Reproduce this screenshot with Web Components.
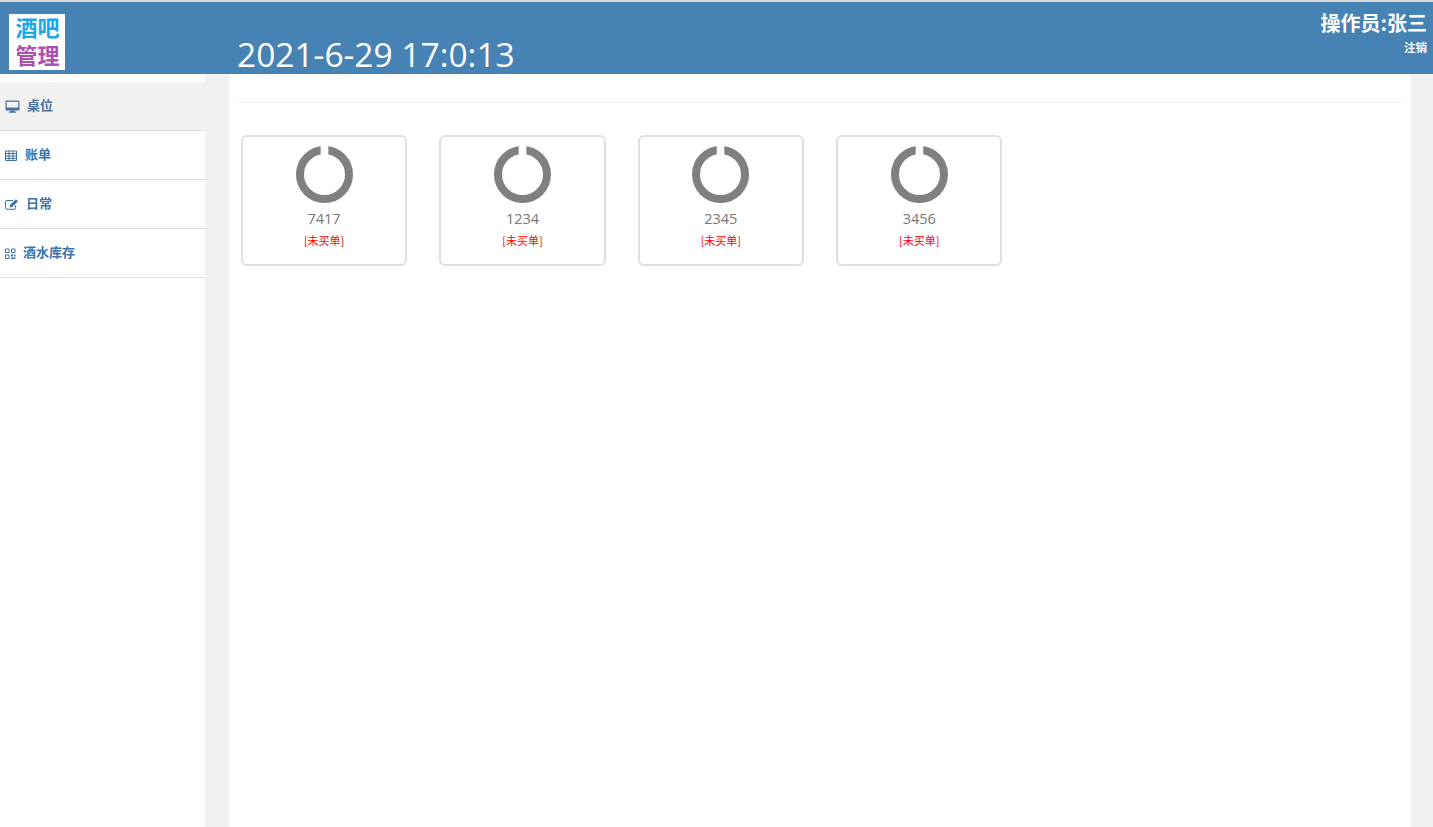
<!DOCTYPE html>
<html lang="zh">
<head>
<meta charset="utf-8">
<title>酒吧管理</title>
<style>
  html, body { margin: 0; height: 100%; background: #f1f1f1; overflow: hidden; }
  body { font-family: "Open Sans", "Noto Sans CJK SC", sans-serif; }
</style>
</head>
<body>
<bar-app>
  <bar-header slot="header" time="2021-6-29 17:0:13" operator="操作员:张三"></bar-header>
  <bar-sidebar slot="sidebar">
    <nav-item icon="desktop" label="桌位" gap="7" active></nav-item>
    <nav-item icon="table" label="账单" gap="5"></nav-item>
    <nav-item icon="edit" label="日常" gap="6"></nav-item>
    <nav-item icon="qrcode" label="酒水库存" gap="3"></nav-item>
  </bar-sidebar>
  <table-card name="7417"></table-card>
  <table-card name="1234"></table-card>
  <table-card name="2345"></table-card>
  <table-card name="3456"></table-card>
</bar-app>

<script>
class BarApp extends HTMLElement {
  constructor () {
    super()
    this.attachShadow({ mode: 'open' }).innerHTML = /*html*/`
    <style>
      :host { display: block; height: 827px; padding-top: 2px; box-sizing: border-box; background: #d8d8d8; }
      .body { display: grid; grid-template-columns: 205px 1fr; height: 753px; background: #f1f1f1; }
      main { background: #fff; margin: 0 22px 0 24px; padding: 0 8px; min-width: 0; }
      .rule { height: 28px; border-bottom: 1px solid #eee; }
      .cards { display: flex; gap: 32.2px; padding: 32px 0 0 4px; }
    </style>
    <slot name="header"></slot>
    <div class="body">
      <slot name="sidebar"></slot>
      <main>
        <div class="rule"></div>
        <div class="cards"><slot></slot></div>
      </main>
    </div>`
  }
}

class BarHeader extends HTMLElement {
  constructor () {
    super()
    this.attachShadow({ mode: 'open' }).innerHTML = /*html*/`
    <style>
      :host { display: flex; height: 72px; background: #4682b4; color: #fff; }
      .logo { width: 56px; height: 56px; box-sizing: border-box; padding: 1px 0 0 1px; margin: 12px 0 0 9px; background: #fff; font: 700 22px/28px "Liberation Sans", "Noto Sans CJK SC", sans-serif; text-align: center; flex: none; }
      .logo div:first-child { color: #1ea6ea; }
      .logo div:last-child { color: #ad4fb2; }
      .time { margin: 31px 0 0 172px; font-size: 33.5px; line-height: 42px; white-space: nowrap; }
      .user { margin-left: auto; padding: 8px 6px 0 0; text-align: right; font-weight: 700; font-family: "Noto Sans CJK SC", sans-serif; }
      .name { font-size: 20px; line-height: 26px; }
      .out { font-size: 11.5px; line-height: 14px; margin-top: 4px; }
    </style>
    <div class="logo"><div>酒吧</div><div>管理</div></div>
    <div class="time"></div>
    <div class="user"><div class="name"></div><div class="out">注销</div></div>`
  }

  connectedCallback () {
    this.shadowRoot.querySelector('.time').textContent = this.getAttribute('time')
    this.shadowRoot.querySelector('.name').textContent = this.getAttribute('operator')
  }
}

class BarSidebar extends HTMLElement {
  constructor () {
    super()
    this.attachShadow({ mode: 'open' }).innerHTML = /*html*/`
    <style>
      :host { display: block; background: #fff; padding-top: 8px; }
    </style>
    <slot></slot>`
  }
}

const ICONS = {
  desktop: '<path d="M1.5 1.5h12a1 1 0 0 1 1 1v8a1 1 0 0 1-1 1h-12a1 1 0 0 1-1-1v-8a1 1 0 0 1 1-1zM1.7 2.700v5.800h11.600V2.700z" fill="currentColor" fill-rule="evenodd"/><path d="M5.500 11.500h4v1h1.500v1.200H4v-1.200h1.500z" fill="currentColor"/>',
  table: '<path d="M.5 3h11v9.500H.5zM.5 5.500h11M.5 8h11M.5 10.300h11M4 3v9.500M8 3v9.500" fill="none" stroke="currentColor"/>',
  edit: '<path d="M10.500 8.500v2.300a1.500 1.500 0 0 1-1.500 1.500H2a1.500 1.500 0 0 1-1.500-1.500V5a1.500 1.500 0 0 1 1.500-1.500h6" fill="none" stroke="currentColor"/><path d="M4.500 10.500l.7-2.700 5.700-5.600 2.100 2-5.700 5.700z" fill="currentColor"/>',
  qrcode: '<path d="M.5 3h3.500v3.500H.5zM6.500 3h3.500v3.500H6.500zM.5 9h3.500v3.500H.5z" fill="none" stroke="currentColor"/><path d="M6 8.500h2v2H6zM9 8.500h1.500v2H9zM6 11.500h4.500V13H6z" fill="currentColor"/>'
}

class NavItem extends HTMLElement {
  constructor () {
    super()
    this.attachShadow({ mode: 'open' }).innerHTML = /*html*/`
    <style>
      :host { display: flex; align-items: center; height: 48px; padding-left: 5px; border-bottom: 1px solid #ddd; color: #3a74ab; font: 700 13px/20px "Noto Sans CJK SC", sans-serif; }
      :host([active]) { background: #f1f1f1; color: #47729e; }
      svg { width: 15px; height: 15px; flex: none; }
      span { position: relative; top: -1px; }
    </style>
    <svg viewBox="0 0 15 15"></svg><span></span>`
  }

  connectedCallback () {
    this.shadowRoot.querySelector('svg').innerHTML = ICONS[this.getAttribute('icon')]
    const label = this.shadowRoot.querySelector('span')
    label.textContent = this.getAttribute('label')
    label.style.marginLeft = this.getAttribute('gap') + 'px'
  }
}

class TableCard extends HTMLElement {
  constructor () {
    super()
    this.attachShadow({ mode: 'open' }).innerHTML = /*html*/`
    <style>
      :host { display: flex; flex-direction: column; align-items: center; width: 166.2px; height: 131px; box-sizing: border-box; border: 2px solid #e0e0e0; border-radius: 6px; padding-top: 9px; flex: none; }
      svg { width: 57px; height: 57px; display: block; }
      .name { color: #777; font-size: 14.5px; line-height: 20px; margin-top: 6px; }
      .state { color: #f00; font: 11px/14px "Noto Sans CJK SC", sans-serif; margin-top: 4px; }
    </style>
    <svg viewBox="0 0 57 57">
      <circle cx="28.5" cy="28.5" r="24.5" fill="none" stroke="#808080" stroke-width="8"/>
      <rect x="24.700" y="0" width="7.600" height="10" fill="#fff"/>
    </svg>
    <div class="name"></div>
    <div class="state">[未买单]</div>`
  }

  connectedCallback () {
    this.shadowRoot.querySelector('.name').textContent = this.getAttribute('name')
  }
}

customElements.define('bar-app', BarApp)
customElements.define('bar-header', BarHeader)
customElements.define('bar-sidebar', BarSidebar)
customElements.define('nav-item', NavItem)
customElements.define('table-card', TableCard)
</script>
</body>
</html>
